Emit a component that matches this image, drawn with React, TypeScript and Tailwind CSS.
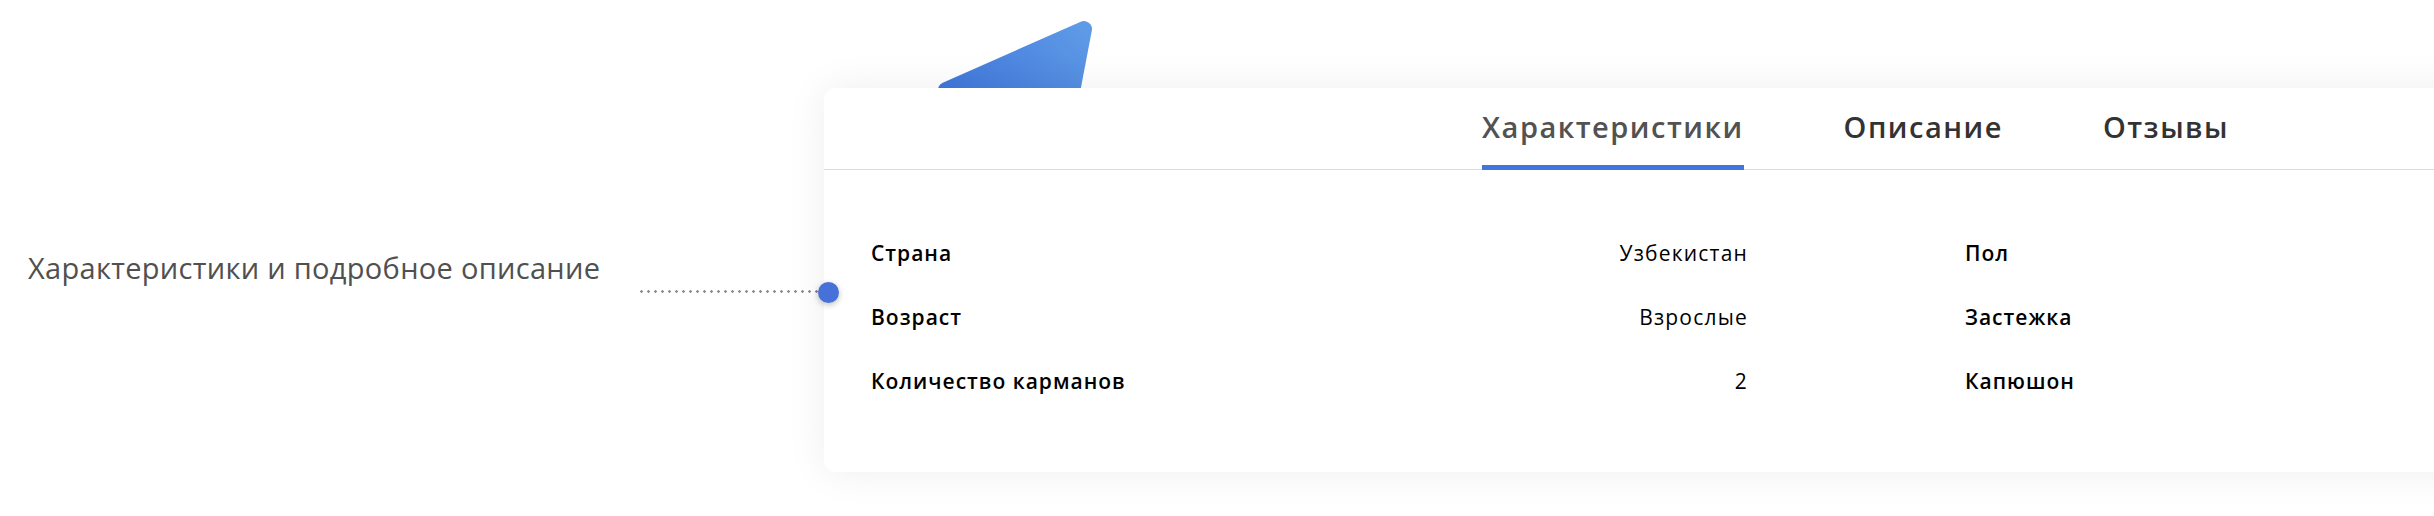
import React from "react";

const font = { fontFamily: '"Open Sans", "Noto Sans", sans-serif' };

const leftRows = [
    { label: "Страна", value: "Узбекистан" },
    { label: "Возраст", value: "Взрослые" },
    { label: "Количество карманов", value: "2" },
];

const rightRows = [{ label: "Пол" }, { label: "Застежка" }, { label: "Капюшон" }];

const tabs = ["Характеристики", "Описание", "Отзывы"];

const Plane = () => (
    <svg
        className="absolute left-[900px] top-0 z-0"
        width="220"
        height="180"
        viewBox="900 0 220 180"
    >
        <defs>
            <linearGradient id="pl" x1="0" y1="1" x2="1" y2="0">
                <stop offset="0" stopColor="#3469d6" />
                <stop offset="1" stopColor="#5e9ae6" />
            </linearGradient>
        </defs>
        <polygon
            points="1084,29 946,90 1058,165"
            fill="url(#pl)"
            stroke="url(#pl)"
            strokeWidth="16"
            strokeLinejoin="round"
        />
    </svg>
);

export default function App() {
    return (
        <div
            className="relative flex h-[516px] w-[2434px] items-start overflow-hidden bg-white pt-[88px]"
            style={font}
        >
            <Plane />

            {/* Caption + leader line */}
            <div className="flex w-[824px] shrink-0 flex-col pt-[163px]">
                <div className="pl-[28px] text-[29px] leading-[34px] tracking-[0.3px] text-[#505050]">
                    Характеристики и подробное описание
                </div>
                <div className="mt-[5px] flex justify-end pr-[6px]">
                    <div className="h-[3px] w-[180px] bg-[radial-gradient(circle,#8c8c8c_1.1px,transparent_1.5px)] bg-[length:7px_3px]" />
                </div>
            </div>

            {/* Card */}
            <div className="relative z-10 h-[384px] w-[1700px] shrink-0 rounded-[12px] bg-white shadow-[0_0_40px_rgba(0,0,0,0.07)]">
                <div className="absolute left-[-6px] top-[194px] h-[21px] w-[21px] rounded-full bg-[#4571d9] shadow-[0_2px_6px_rgba(0,0,0,0.25)]" />

                <div className="flex h-[82px] items-end gap-[100px] border-b border-[#dcdcdc] pl-[658px]">
                    {tabs.map((tab, i) => (
                        <div
                            key={tab}
                            className={`-mb-px border-b-[5px] pb-[21px] text-[29px] font-semibold leading-[34px] tracking-[1.5px] ${
                                i === 0
                                    ? "border-[#3f77dc] text-[#525252]"
                                    : "border-transparent text-[#333333]"
                            }`}
                        >
                            {tab}
                        </div>
                    ))}
                </div>

                <div className="grid grid-cols-[877px_877px] gap-x-[217px] pl-[47px] pt-[71px]">
                    <div className="flex flex-col gap-[40px]">
                        {leftRows.map((r) => (
                            <div
                                key={r.label}
                                className="flex h-[24px] items-center justify-between text-[21px] leading-[24px] text-black"
                            >
                                <span className="font-semibold tracking-[1px]">{r.label}</span>
                                <span className="font-medium tracking-[1.2px] text-black">{r.value}</span>
                            </div>
                        ))}
                    </div>
                    <div className="flex flex-col gap-[40px]">
                        {rightRows.map((r) => (
                            <div
                                key={r.label}
                                className="flex h-[24px] items-center text-[21px] font-semibold leading-[24px] tracking-[1px] text-black"
                            >
                                {r.label}
                            </div>
                        ))}
                    </div>
                </div>
            </div>
        </div>
    );
}
